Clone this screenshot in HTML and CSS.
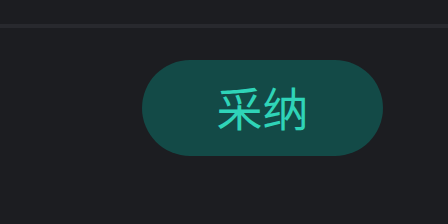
FILE: index.html
```html
<!DOCTYPE html>
<html lang="zh">
<head>
<meta charset="utf-8">
<link rel="stylesheet" href="styles.css">
</head>
<body>
<div class="page">
  <div class="top"></div>
  <div class="divider"></div>
  <div class="actions">
    <button class="adopt">采纳</button>
  </div>
</div>
</body>
</html>
```
FILE: styles.css
```css
html, body {
  margin: 0;
  padding: 0;
  background: #1c1d21;
}
.page {
  width: 448px;
  height: 224px;
  display: flex;
  flex-direction: column;
  overflow: hidden;
}
.top {
  height: 24px;
  flex: none;
}
.divider {
  height: 4px;
  background: #28292e;
  flex: none;
}
.actions {
  display: flex;
  justify-content: flex-end;
  padding: 32px 65px 0 0;
}
.adopt {
  width: 241px;
  height: 96px;
  border: none;
  border-radius: 48px;
  background: #134a47;
  color: #2fd4b8;
  font-family: "Noto Sans CJK SC", "Noto Sans", sans-serif;
  font-size: 46px;
  font-weight: 400;
  line-height: 1;
  padding: 0 0 4px 0;
  display: flex;
  align-items: center;
  justify-content: center;
}
```
